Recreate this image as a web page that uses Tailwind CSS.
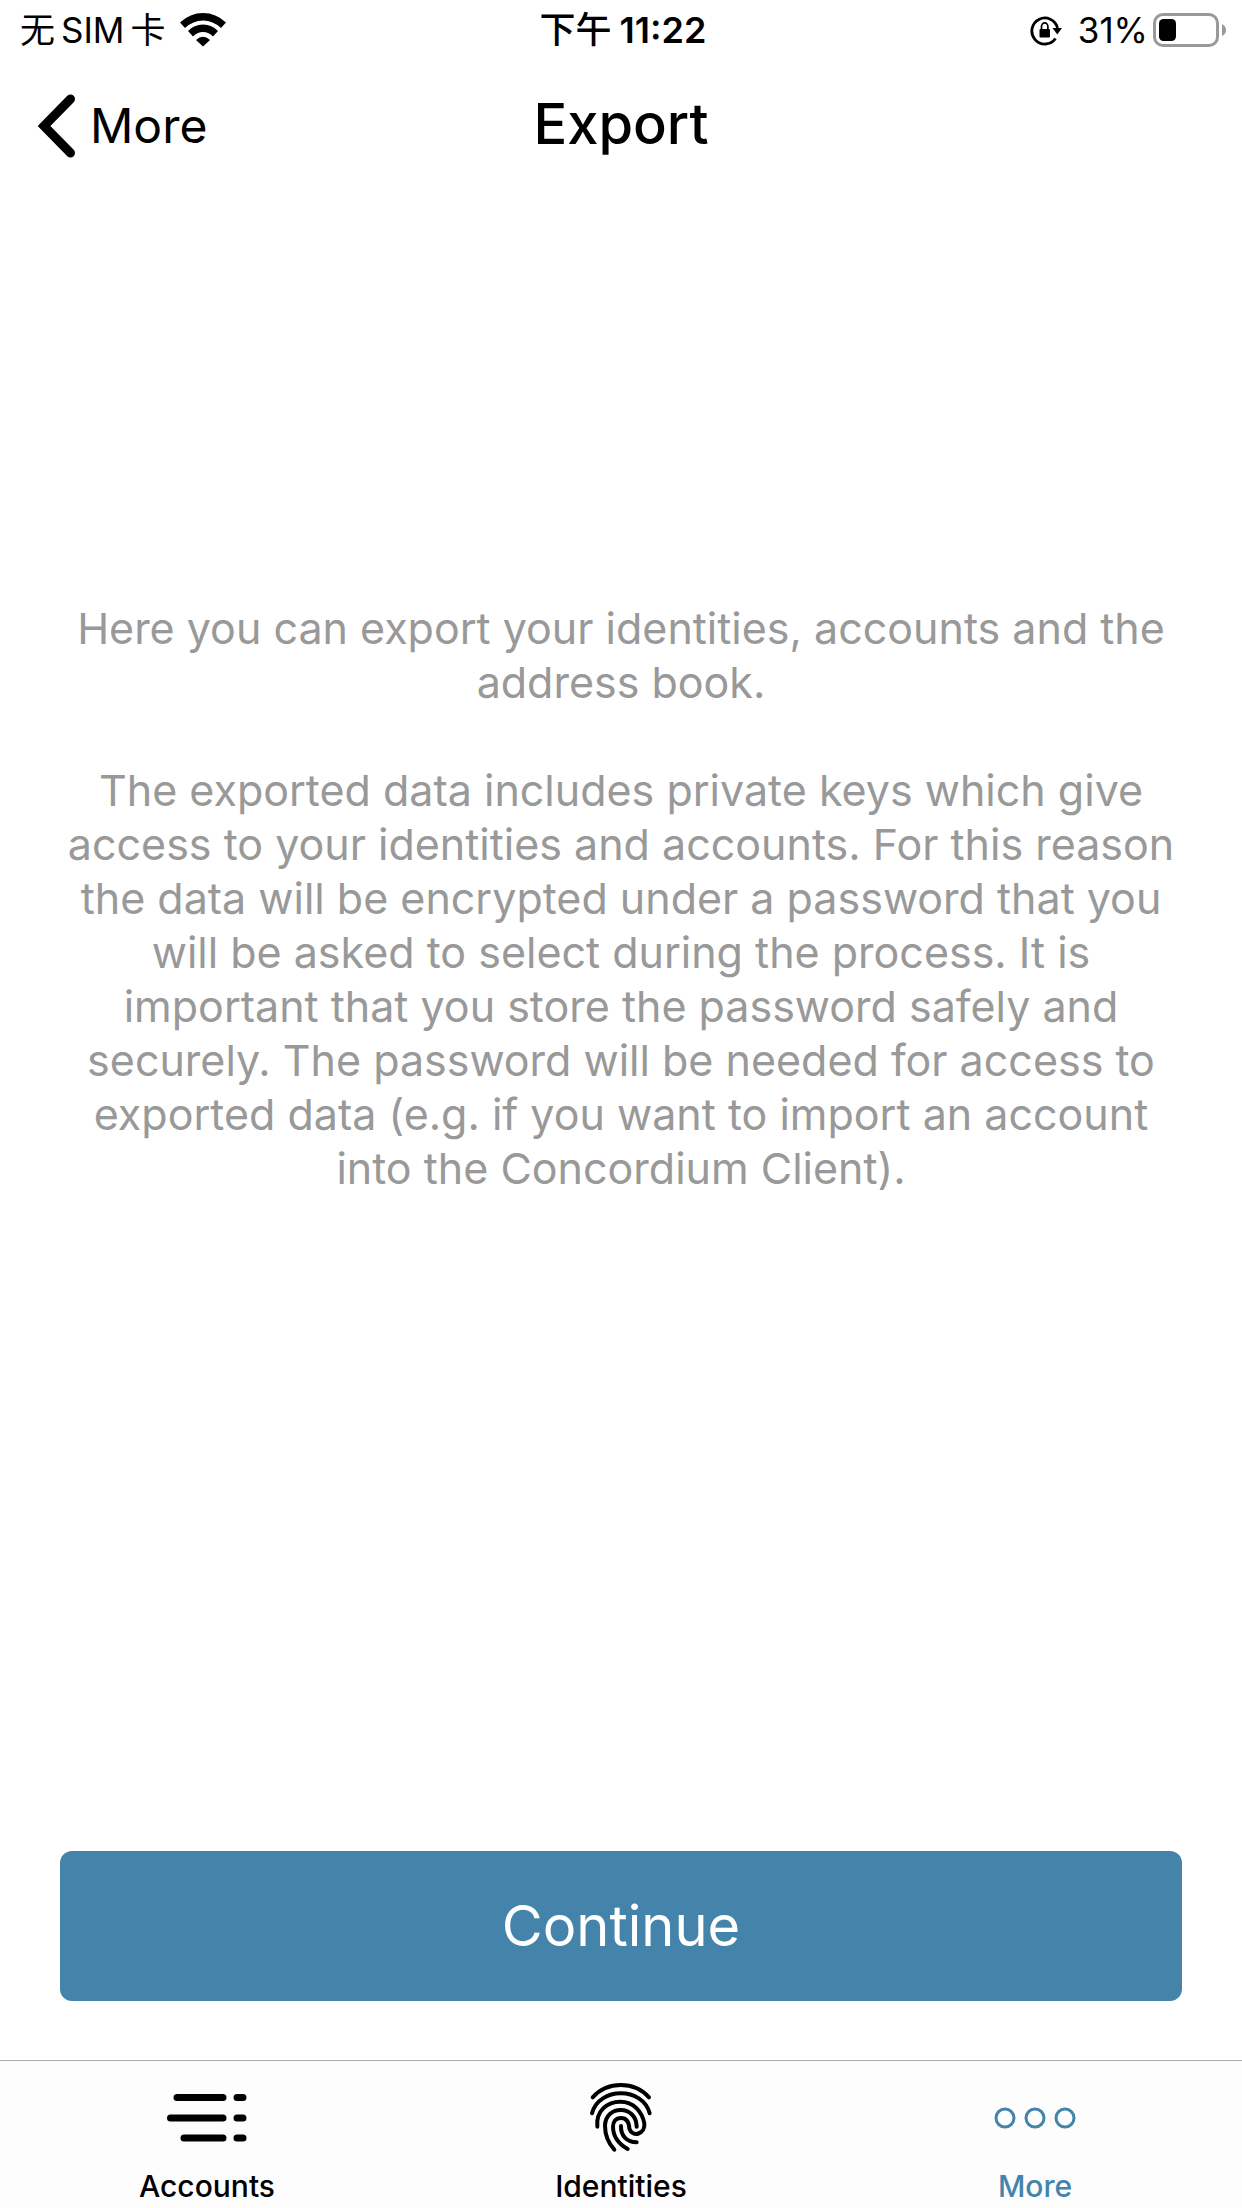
<!DOCTYPE html>
<html lang="en">
<head>
<meta charset="utf-8">
<meta name="viewport" content="width=device-width, initial-scale=1">
<title>Export</title>
<script src="https://cdn.jsdelivr.net/npm/@tailwindcss/browser@4"></script>
</head>
<body class="flex min-h-screen flex-col bg-white font-['Inter','Noto_Sans_CJK_SC',sans-serif] text-black">
  <!-- Status bar -->
  <div class="grid h-[60px] grid-cols-[1fr_auto_1fr] items-center pr-4 pl-5 text-[35px] leading-10">
    <div class="flex items-center gap-3.5">
      <span class="flex gap-1.5" lang="zh-CN"><span>无</span><span>SIM</span><span>卡</span></span>
      <svg class="h-[34px] w-[46px]" viewBox="0 0 46 34" aria-label="Wi-Fi">
        <path d="M0 9.500Q10 0 23 0T46 9.500L41 15Q33 7.500 23 7.500T5 15Z"/>
        <path d="M8 18Q14 11.500 23 11.500T38 18L33 23.500Q29 19 23 19T13 23.500Z"/>
        <path d="M16 27Q23 20.500 30 27L23 33.500Z"/>
      </svg>
    </div>
    <time class="flex gap-2 text-[36px] font-semibold" lang="zh-CN"><span class="font-medium">下午</span><span>11:22</span></time>
    <div class="flex items-center justify-end gap-1">
      <svg class="mr-3 h-8 w-8" viewBox="0 0 32 32" fill="none" aria-label="Orientation lock">
        <path d="M25.500 24.500A13 13 0 1 1 27.500 14" stroke="#000" stroke-width="2.800"/>
        <path d="M22.500 14H32L27.300 20.500Z" fill="#000"/>
        <rect x="9.500" y="15" width="10.500" height="8.500" rx="1" fill="#000"/>
        <path d="M11.500 16v-3.500a3.200 3.600 0 0 1 6.400 0V16" stroke="#000" stroke-width="1.700"/>
      </svg>
      <span>31%</span>
      <svg class="h-[34px] w-[74px]" viewBox="0 0 74 34" aria-label="Battery">
        <rect x="2.500" y="1.500" width="63" height="31" rx="8.500" fill="none" stroke="#999" stroke-width="3"/>
        <rect x="7" y="6" width="17" height="22" rx="4.500"/>
        <path d="M70 11Q74 13 74 17T70 23Z" fill="#999"/>
      </svg>
    </div>
  </div>

  <!-- Navigation bar -->
  <header class="grid h-[132px] grid-cols-[1fr_auto_1fr] items-center px-9">
    <a href="#more" class="flex items-center gap-3.5 text-[48px] leading-[60px]">
      <svg class="h-16 w-10" viewBox="0 0 40 64" fill="none" stroke="#000" stroke-width="9" stroke-linecap="round" stroke-linejoin="miter" aria-hidden="true"><path d="M34.500 5L8 32L34.500 59"/></svg>
      <span>More</span>
    </a>
    <h1 class="pb-1 text-[56px] leading-[68px] font-medium">Export</h1>
  </header>

  <main class="flex flex-1 flex-col px-[60px] pb-[59px]">
    <div class="flex flex-1 flex-col justify-center gap-[54px] pb-[248px] text-center text-[43px] leading-[54px] text-[#999]">
      <p>Here you can export your identities, accounts and the address book.</p>
      <p>The exported data includes private keys which give access to your identities and accounts. For this reason the data will be encrypted under a password that you will be asked to select during the process. It is important that you store the password safely and securely. The password will be needed for access to exported data (e.g. if you want to import an account into the Concordium Client).</p>
    </div>
    <button type="button" class="h-[150px] w-full rounded-xl bg-[#4484ab] text-[56px] text-white">Continue</button>
  </main>

  <!-- Tab bar -->
  <nav class="grid h-[148px] grid-cols-3 border-t border-[#adadad] bg-[#fdfdfd] pt-[17px] text-[30px] leading-9 font-medium">
    <a href="#accounts" class="flex flex-col items-center gap-2.5">
      <svg class="h-20 w-20 shrink-0" viewBox="0 0 80 80" stroke="#000" stroke-width="7" stroke-linecap="round" aria-hidden="true"><path d="M10 19.500H56M3.500 40H56M17 60H56M70 19.500H76M70 40H76M70 60H76"/></svg>
      <span>Accounts</span>
    </a>
    <a href="#identities" class="flex flex-col items-center gap-2.5">
      <svg class="h-20 w-20 shrink-0" viewBox="32 24 240 240" fill="none" stroke="#000" stroke-width="12" stroke-linecap="round" aria-hidden="true">
        <path d="M67 82C112 33 191 33 236 82"/>
        <path d="M65 130C85 50 218 50 238 130"/>
        <path d="M81 170C76 122 112 95 150 95C190 95 215 125 222 160C226 192 186 204 177 176C176 154 168 144 152 144C137 144 128 154 128 170C128 200 146 222 172 237"/>
        <path d="M132 239C112 217 104 192 104 167C106 104 198 104 199 170"/>
        <path d="M152 168C151 198 170 217 199 217"/>
      </svg>
      <span>Identities</span>
    </a>
    <a href="#more" aria-current="page" class="flex flex-col items-center gap-2.5 text-[#4484ab]">
      <svg class="h-20 w-[84px] shrink-0" viewBox="0 0 84 80" fill="none" stroke="currentColor" stroke-width="3" aria-hidden="true"><circle cx="12" cy="40" r="9"/><circle cx="42" cy="40" r="9"/><circle cx="72" cy="40" r="9"/></svg>
      <span>More</span>
    </a>
  </nav>
</body>
</html>
